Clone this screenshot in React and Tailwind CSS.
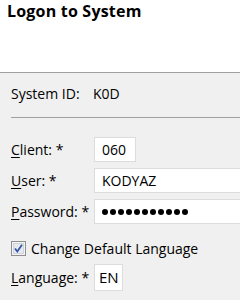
import React from 'react';

const Field = ({ label, accessKey, children }) => (
    <div className="flex items-center h-[25px]">
        <label className="w-[83px] shrink-0">
            <span className="underline underline-offset-2">{accessKey}</span>
            {label}
        </label>
        {children}
    </div>
);

export default function App() {
    return (
        <div
            className="w-[240px] h-[300px] overflow-hidden bg-[#f0f0f0] text-[14px] text-black flex flex-col"
            style={{ fontFamily: '"Open Sans", "Noto Sans", sans-serif' }}
        >
            {/* Header */}
            <div className="h-[73px] shrink-0 bg-white border-b border-[#a0a0a0] pl-[7px]">
                <h1 className="text-[16px] font-bold leading-[22px] tracking-[0.2px]">Logon to System</h1>
            </div>

            {/* Body */}
            <div className="pl-[11px] flex flex-col">
                <div className="flex items-center h-[44px] pb-[4px]">
                    <span className="w-[82px]">System ID:</span>
                    <span>K0D</span>
                </div>
                <div className="h-px bg-[#a0a0a0]" />

                <div className="flex flex-col gap-[6px] mt-[19px]">
                    <Field accessKey="C" label="lient: *">
                        <div className="w-[42px] h-[25px] bg-white border border-[#dcdcdc] pl-[7px] flex items-center">060</div>
                    </Field>
                    <Field accessKey="U" label="ser: *">
                        <div className="flex-1 h-[25px] bg-white border border-[#dcdcdc] border-r-0 pl-[7px] flex items-center">KODYAZ</div>
                    </Field>
                    <Field accessKey="P" label="assword: *">
                        <div className="flex-1 h-[25px] bg-white border border-[#dcdcdc] border-r-0 pl-[7px] flex items-center gap-[2px]">
                            {Array.from({ length: 11 }).map((_, i) => (
                                <div key={i} className="w-[6px] h-[6px] rounded-full bg-black" />
                            ))}
                        </div>
                    </Field>
                </div>

                <div className="flex items-center gap-[5px] mt-[16px] h-[17px]">
                    <svg width="15" height="15" viewBox="0 0 15 15" className="shrink-0">
                        <rect x="0.5" y="0.5" width="14" height="14" fill="#f4f4f4" stroke="#8e8f8f" />
                        <rect x="2.5" y="2.5" width="10" height="10" fill="#e6e9ee" stroke="#d0d4da" />
                        <path d="M4 7.5 L6.3 10.5 L11 3.8" fill="none" stroke="#3458a8" strokeWidth="1.8" />
                    </svg>
                    <span>Change Default Language</span>
                </div>

                <div className="flex items-center mt-[7px]">
                    <label className="w-[83px] shrink-0">
                        <span className="underline underline-offset-2">L</span>anguage: *
                    </label>
                    <div className="w-[29px] h-[27px] bg-white border border-[#dcdcdc] pl-[4px] flex items-center text-[15px]">EN</div>
                </div>
            </div>
        </div>
    );
}
